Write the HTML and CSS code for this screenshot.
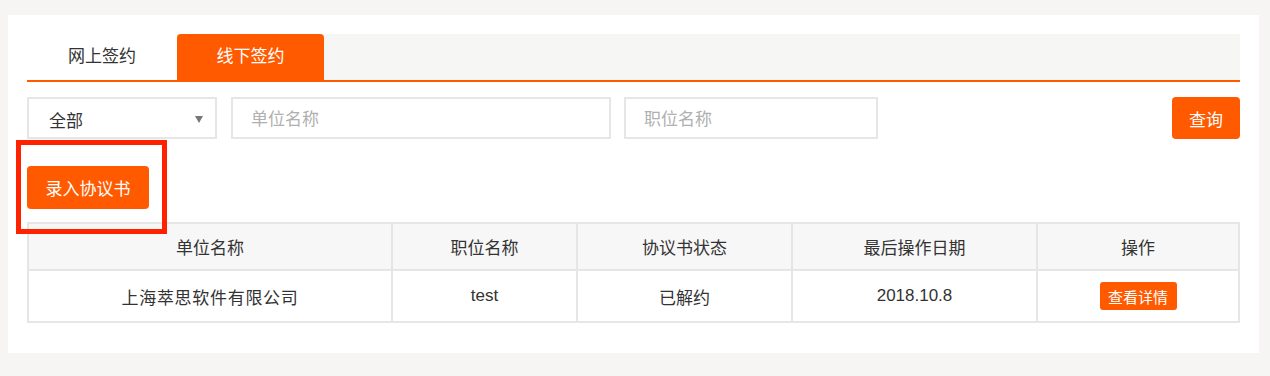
FILE: index.html
```html
<!DOCTYPE html>
<html lang="zh-CN">
<head>
    <meta charset="UTF-8">
    <title>协议书管理</title>
    <link rel="stylesheet" href="styles.css">
</head>
<body>
    <div class="panel">
        <div class="tabs">
            <div class="tab">网上签约</div>
            <div class="tab active">线下签约</div>
        </div>
        <div class="filters">
            <div class="select">
                <span>全部</span>
                <span class="arrow"></span>
            </div>
            <input class="field field-company" type="text" placeholder="单位名称">
            <input class="field field-job" type="text" placeholder="职位名称">
            <button class="btn btn-query">查询</button>
        </div>
        <div class="actions">
            <button class="btn btn-add">录入协议书</button>
        </div>
        <table class="list">
            <thead>
                <tr>
                    <th class="col-company">单位名称</th>
                    <th class="col-job">职位名称</th>
                    <th class="col-state">协议书状态</th>
                    <th class="col-date">最后操作日期</th>
                    <th>操作</th>
                </tr>
            </thead>
            <tbody>
                <tr>
                    <td class="wide">上海萃思软件有限公司</td>
                    <td>test</td>
                    <td>已解约</td>
                    <td>2018.10.8</td>
                    <td><button class="btn btn-small">查看详情</button></td>
                </tr>
            </tbody>
        </table>
        <div class="highlight"></div>
    </div>
</body>
</html>
```

FILE: styles.css
```css
body {
    margin: 0;
    background-color: #f6f5f3;
    font-family: "Liberation Sans", "Noto Sans CJK SC", sans-serif;
    color: #333;
}
.panel {
    position: relative;
    width: 1213px;
    margin: 15px 0 0 8px;
    padding: 19px 19px 30px 19px;
    background-color: #ffffff;
}
.tabs {
    display: flex;
    height: 46px;
    background-color: #f6f6f5;
    border-bottom: 2px solid #ff5a00;
}
.tab {
    width: 150px;
    line-height: 46px;
    text-align: center;
    font-size: 17px;
    background-color: #ffffff;
}
.tab.active {
    width: 147px;
    background-color: #ff5a00;
    color: #fff;
    border-radius: 4px 4px 0 0;
}
.filters {
    display: flex;
    align-items: center;
    gap: 14px;
    margin-top: 15px;
}
.select {
    display: flex;
    align-items: center;
    justify-content: space-between;
    box-sizing: border-box;
    width: 190px;
    height: 42px;
    padding: 2px 12px 0 20px;
    border: 2px solid #e6e6e6;
    font-size: 17px;
}
.arrow {
    width: 0;
    height: 0;
    border-left: 4px solid transparent;
    border-right: 4px solid transparent;
    border-top: 7px solid #777;
}
.field {
    box-sizing: border-box;
    height: 42px;
    padding: 3px 18px 0 18px;
    border: 2px solid #e6e6e6;
    font-family: inherit;
    font-size: 17px;
    color: #333;
    outline: none;
}
.field::placeholder {
    color: #b0b0b0;
}
.field-company {
    width: 380px;
}
.field-job {
    width: 254px;
    margin-left: -1px;
}
.btn {
    border: none;
    background-color: #ff5a00;
    color: #fff;
    font-family: inherit;
    cursor: pointer;
}
.btn-query {
    width: 68px;
    height: 42px;
    margin-left: auto;
    border-radius: 4px;
    font-size: 17px;
}
.actions {
    margin-top: 27px;
}
.btn-add {
    width: 122px;
    height: 43px;
    border-radius: 4px;
    font-size: 17px;
}
.list {
    width: 100%;
    margin-top: 13px;
    border-collapse: collapse;
    font-size: 17px;
}
.list th,
.list td {
    border: 2px solid #e6e6e6;
    text-align: center;
    padding: 0;
}
.list th {
    height: 45px;
    font-weight: normal;
    background-color: #f7f7f7;
}
.list td {
    height: 50px;
}
.list td.wide {
    letter-spacing: 0.7px;
}
.col-company {
    width: 362px;
}
.col-job {
    width: 183px;
}
.col-state {
    width: 213px;
}
.col-date {
    width: 243px;
}
.btn-small {
    width: 77px;
    height: 28px;
    padding: 0;
    border-radius: 3px;
    font-size: 15px;
    vertical-align: middle;
}
.highlight {
    position: absolute;
    left: 8px;
    top: 125px;
    box-sizing: border-box;
    width: 151px;
    height: 94px;
    border: 5px solid #ff2200;
}
```
